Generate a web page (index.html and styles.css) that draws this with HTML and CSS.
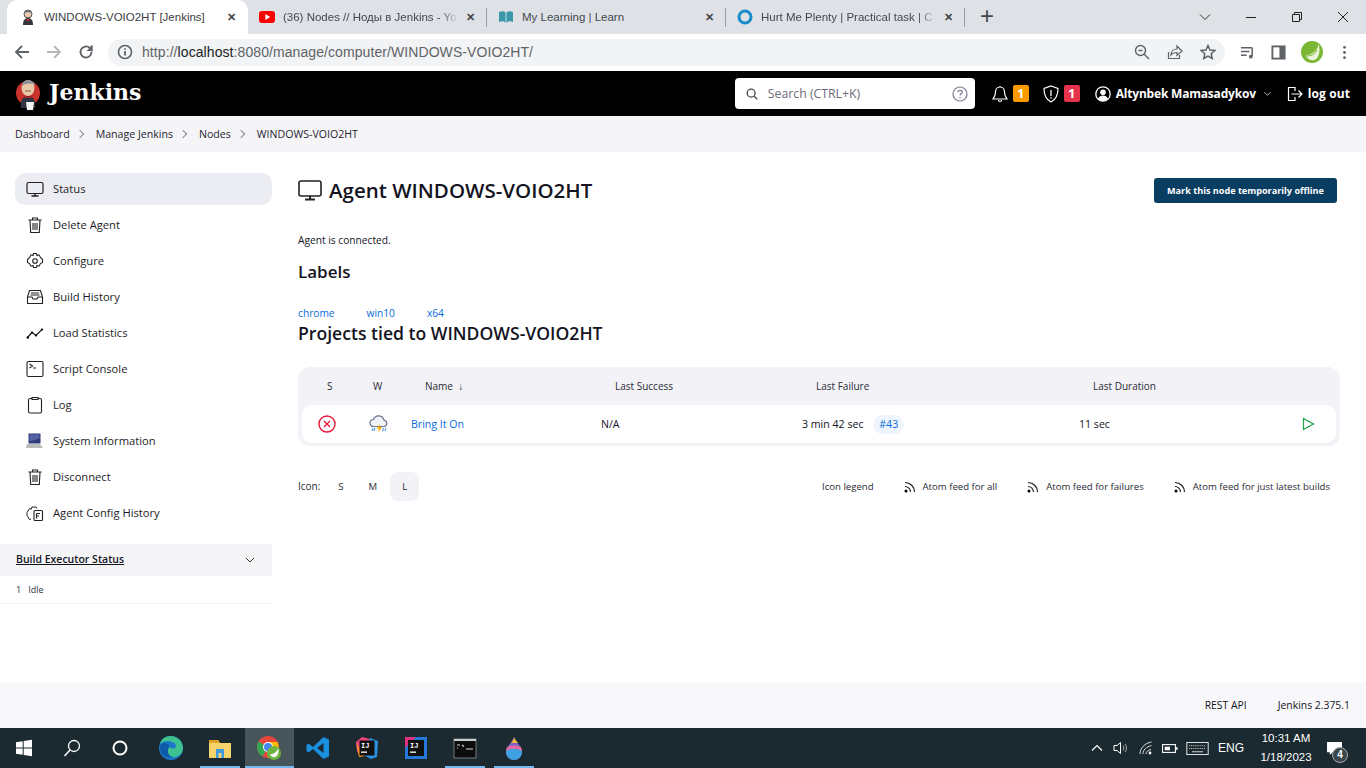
FILE: index.html
```html
<!DOCTYPE html>
<html lang="en">
<head>
    <meta charset="UTF-8">
    <title>WINDOWS-VOIO2HT [Jenkins]</title>
    <link rel="stylesheet" href="styles.css">
</head>
<body>
    <!-- browser window -->
    <div class="tabstrip">
        <div class="tab tab-active">
            <svg class="favicon" viewBox="0 0 16 16"><circle cx="8" cy="5" r="4" fill="#e8c9ad" stroke="#555"/><path d="M3 16c0-5 2-7 5-7s5 2 5 7z" fill="#33363f"/><path d="M6 10h4l-2 3z" fill="#c0312b"/><path d="M4 4c1-3 7-4 8 0-2-1-6-1-8 0z" fill="#6b7280"/></svg>
            <span class="tab-title">WINDOWS-VOIO2HT [Jenkins]</span>
            <span class="tab-close">✕</span>
        </div>
        <div class="tab tab-sep">
            <svg class="favicon" viewBox="0 0 16 16"><rect y="2" width="16" height="12" rx="3" fill="#f00"/><path d="M6.300 5v6l5-3z" fill="#fff"/></svg>
            <span class="tab-title tab-fade">(36) Nodes // Ноды в Jenkins - Yo</span>
            <span class="tab-close">✕</span>
        </div>
        <div class="tab tab-sep">
            <svg class="favicon" viewBox="0 0 16 16"><path d="M1 3c3-1 5-1 7 1 2-2 4-2 7-1v10c-3-1-5-1-7 1-2-2-4-2-7-1z" fill="#3c97a8"/><path d="M8 4v10" stroke="#bde" stroke-width="1"/></svg>
            <span class="tab-title">My Learning | Learn</span>
            <span class="tab-close">✕</span>
        </div>
        <div class="tab tab-sep">
            <svg class="favicon" viewBox="0 0 16 16"><circle cx="8" cy="8" r="6" fill="none" stroke="#1a8ccb" stroke-width="3"/></svg>
            <span class="tab-title tab-fade">Hurt Me Plenty | Practical task | C</span>
            <span class="tab-close">✕</span>
        </div>
        <span class="new-tab">+</span>
        <div class="window-btns">
            <svg viewBox="0 0 12 12"><path d="M1 3.500l5 5 5-5" fill="none" stroke="#333"/></svg>
            <svg viewBox="0 0 12 12"><path d="M1 6.500h10" stroke="#222"/></svg>
            <svg viewBox="0 0 12 12"><path d="M1.500 3.500h7v7h-7zM3.500 3.500v-2h7v7h-2" fill="none" stroke="#222"/></svg>
            <svg viewBox="0 0 12 12"><path d="M1 1l10 10M11 1L1 11" stroke="#222"/></svg>
        </div>
    </div>

    <div class="toolbar">
        <svg class="tool-icon" viewBox="0 0 16 16"><path d="M15 8H2M8 2L2 8l6 6" fill="none" stroke="#5f6368" stroke-width="1.800"/></svg>
        <svg class="tool-icon" viewBox="0 0 16 16"><path d="M1 8h13M8 2l6 6-6 6" fill="none" stroke="#b4b6b9" stroke-width="1.800"/></svg>
        <svg class="tool-icon" viewBox="0 0 16 16"><path d="M13.500 8a5.500 5.500 0 1 1-1.600-3.900L13.500 6V1.500" fill="none" stroke="#5f6368" stroke-width="1.800"/><path d="M14.500 1v6h-6z" fill="#5f6368"/></svg>
        <div class="omnibox">
            <svg class="info-icon" viewBox="0 0 16 16"><circle cx="8" cy="8" r="6.500" fill="none" stroke="#5f6368" stroke-width="1.600"/><path d="M8 7v4.500M8 4.200v1.600" stroke="#5f6368" stroke-width="1.800"/></svg>
            <span class="url">http://<b>localhost</b>:8080/manage/computer/WINDOWS-VOIO2HT/</span>
            <div class="omni-icons">
                <svg viewBox="0 0 16 16"><circle cx="6.500" cy="6.500" r="5" fill="none" stroke="#5f6368" stroke-width="1.400"/><path d="M10 10l5 5M4.500 6.500h4" stroke="#5f6368" stroke-width="1.400"/></svg>
                <svg viewBox="0 0 16 16"><path d="M1.500 8v6.500h11V11" fill="none" stroke="#5f6368" stroke-width="1.200"/><path d="M4 11c0-4 3-6 6-6V2l5 5-5 4.500V8.500c-3 0-5 1-6 2.500z" fill="none" stroke="#5f6368" stroke-width="1.200"/></svg>
                <svg viewBox="0 0 16 16"><path d="M8 1.500l2 4.500 4.800.5-3.600 3.200 1 4.800L8 12l-4.200 2.500 1-4.800L1.200 6.500 6 6z" fill="none" stroke="#5f6368" stroke-width="1.500"/></svg>
            </div>
        </div>
        <div class="ext-icons">
            <svg viewBox="0 0 16 16"><path d="M1 3h12M1 7h9M1 11h6" stroke="#5f6368" stroke-width="1.600"/><path d="M13 3v9" stroke="#5f6368" stroke-width="1.600"/><circle cx="11.500" cy="12.500" r="2" fill="#5f6368"/></svg>
            <svg viewBox="0 0 16 16"><rect x="1.500" y="1.500" width="13" height="13" fill="none" stroke="#5f6368" stroke-width="2"/><rect x="9" y="2" width="5" height="12" fill="#5f6368"/></svg>
            <svg class="spring-avatar" viewBox="0 0 22 22"><circle cx="11" cy="11" r="11" fill="#7ab733"/><path d="M17.500 3C17 9 12 13 5 14.500c1 3.500 5 5.500 8.500 4.500 5-2 6-10 4-16z" fill="#eaf4dc"/><path d="M6 15c4 0 8-2 10-6" fill="none" stroke="#7ab733"/></svg>
            <svg viewBox="0 0 16 16"><circle cx="8" cy="2.500" r="1.500" fill="#5f6368"/><circle cx="8" cy="8" r="1.500" fill="#5f6368"/><circle cx="8" cy="13.500" r="1.500" fill="#5f6368"/></svg>
        </div>
    </div>

    <!-- jenkins header -->
    <header class="page-header">
        <div class="logo">
            <svg class="logo-img" viewBox="0 0 26 32">
                <circle cx="13" cy="15" r="12" fill="#c8322b"/>
                <path d="M6 30c-1-6 1-12 7-12s8 6 7 12z" fill="#2f3340"/>
                <ellipse cx="13" cy="10" rx="6.500" ry="8" fill="#eac7a8"/>
                <path d="M7 8c0-7 12-8 13-1-3-2-9-2-13 1z" fill="#8a8f99"/>
                <path d="M9 17l4 2 4-2-1 3h-6z" fill="#b5221d"/>
                <path d="M11 24h8l-1 8h-6z" fill="#f4f4f4"/>
                <path d="M10 13h6" stroke="#8a5a44"/>
            </svg>
            <span class="logo-text">Jenkins</span>
        </div>
        <div class="header-right">
            <div class="search-box">
                <svg class="search-icon" viewBox="0 0 16 16"><circle cx="7" cy="7" r="4.500" fill="none" stroke="#444" stroke-width="1.500"/><path d="M10.500 10.500L14 14" stroke="#444" stroke-width="1.500"/></svg>
                <span class="search-text">Search (CTRL+K)</span>
                <svg class="help-icon" viewBox="0 0 16 16"><circle cx="8" cy="8" r="7" fill="none" stroke="#7b7b93" stroke-width="1.200"/><path d="M5.800 6.200C6 3.800 10.200 3.800 10.200 6.200 10.200 7.800 8 7.800 8 9.600M8 11v1.300" fill="none" stroke="#7b7b93" stroke-width="1.200"/></svg>
            </div>
            <div class="head-item head-bell">
                <svg viewBox="0 0 16 18"><path d="M8 2c-3 0-4.500 2.500-4.500 5 0 4-1.500 5-2.500 7h14c-1-2-2.500-3-2.500-7 0-2.500-1.500-5-4.500-5zM6.500 15c0 2 3 2 3 0M8 1v1" fill="none" stroke="#fff" stroke-width="1.200"/></svg>
                <span class="badge badge-orange">1</span>
            </div>
            <div class="head-item head-shield">
                <svg viewBox="0 0 16 18"><path d="M8 1l7 2.500c0 7-2 11-7 13.500C3 14.500 1 10.500 1 3.500z" fill="none" stroke="#fff" stroke-width="1.200"/><path d="M8 5v6M8 12.300v1.400" stroke="#fff" stroke-width="1.300"/></svg>
                <span class="badge badge-red">1</span>
            </div>
            <div class="head-item head-user">
                <svg viewBox="0 0 16 16"><circle cx="8" cy="8" r="7.200" fill="none" stroke="#fff" stroke-width="1.300"/><circle cx="8" cy="6.300" r="2.800" fill="#fff"/><path d="M3 13c1-3 3-3.500 5-3.500s4 .5 5 3.500c-3 2.500-7 2.500-10 0z" fill="#fff"/></svg>
                <span class="user-name">Altynbek Mamasadykov</span>
                <svg class="user-caret" viewBox="0 0 10 10"><path d="M1.500 3.500L5 7l3.500-3.500" fill="none" stroke="#ccc"/></svg>
            </div>
            <div class="head-item head-logout">
                <svg viewBox="0 0 16 16"><path d="M8 5V1.500H1.500v13H8V11" fill="none" stroke="#fff" stroke-width="1.200"/><path d="M4.500 8H15M11.500 4.500L15 8l-3.500 3.500" fill="none" stroke="#fff" stroke-width="1.200"/></svg>
                <span class="user-name logout-text">log out</span>
            </div>
        </div>
    </header>

    <nav class="breadcrumbs">
        <span>Dashboard</span><i class="crumb-sep"></i>
        <span>Manage Jenkins</span><i class="crumb-sep"></i>
        <span>Nodes</span><i class="crumb-sep"></i>
        <span>WINDOWS-VOIO2HT</span>
    </nav>

    <div class="page-body">
        <aside class="side-panel">
            <ul class="side-tasks">
                <li class="task task-active">
                    <svg viewBox="0 0 18 18"><rect x="1" y="2.500" width="16" height="11" rx="1.500" fill="none" stroke="#222" stroke-width="1.200"/><path d="M5.500 16h7M9 13.500V16" stroke="#222" stroke-width="1.500"/></svg>
                    <span>Status</span>
                </li>
                <li class="task">
                    <svg viewBox="0 0 18 18"><path d="M2.500 4h13M6.500 4V2h5v2M4 4l.7 12.500h8.600L14 4M7 7v7M9 7v7M11 7v7" fill="none" stroke="#222" stroke-width="1.100"/></svg>
                    <span>Delete Agent</span>
                </li>
                <li class="task">
                    <svg viewBox="0 0 18 18"><path d="M7.500 1.500h3l.5 2 2-.7 1.500 2.600 2 2.100v3l-2 1.100-1.500 2.600-2-.7-.5 2h-3l-.5-2-2 .7-1.500-2.600-2-1.100v-3l2-2.100L5 2.800l2 .7z" fill="none" stroke="#222" stroke-width="1.100"/><circle cx="9" cy="9" r="2.300" fill="none" stroke="#222" stroke-width="1.100"/></svg>
                    <span>Configure</span>
                </li>
                <li class="task">
                    <svg viewBox="0 0 18 18"><path d="M1.500 9l2-6.500h11l2 6.500v6.500h-15zM1.500 9H6l1 2h4l1-2h4.500M5 5h8M4.500 7h9" fill="none" stroke="#222" stroke-width="1.100"/></svg>
                    <span>Build History</span>
                </li>
                <li class="task">
                    <svg viewBox="0 0 18 18"><path d="M1.500 13.500l4.500-5 4 3 6.500-6.500" fill="none" stroke="#222" stroke-width="1.300"/><circle cx="1.800" cy="13.500" r="1.200"/><circle cx="6" cy="8.500" r="1.100"/><circle cx="10" cy="11.500" r="1.100"/><circle cx="16" cy="5.500" r="1.100"/></svg>
                    <span>Load Statistics</span>
                </li>
                <li class="task">
                    <svg viewBox="0 0 18 18"><rect x="1" y="1.500" width="16" height="15" rx="1.500" fill="none" stroke="#222" stroke-width="1.100"/><path d="M3.500 4l3 2-3 2M7 8h3" fill="none" stroke="#222" stroke-width="1.100"/></svg>
                    <span>Script Console</span>
                </li>
                <li class="task">
                    <svg viewBox="0 0 18 18"><path d="M6 2.500H4a1.500 1.500 0 0 0-1.500 1.500v11.500A1.500 1.500 0 0 0 4 17h10a1.500 1.500 0 0 0 1.500-1.500V4A1.500 1.500 0 0 0 14 2.500h-2M6 1.500h6v2H6z" fill="none" stroke="#222" stroke-width="1.100"/></svg>
                    <span>Log</span>
                </li>
                <li class="task">
                    <svg viewBox="0 0 18 18"><rect x="2.500" y="1.500" width="12" height="10" fill="#2e3a78"/><path d="M3.500 2.500h10v4l-10 3z" fill="#5562a6"/><path d="M1 12h13l3 4H0z" fill="#b9bcb8"/></svg>
                    <span>System Information</span>
                </li>
                <li class="task">
                    <svg viewBox="0 0 18 18"><path d="M2.500 4h13M6.500 4V2h5v2M4 4l.7 12.500h8.600L14 4M7 7v7M9 7v7M11 7v7" fill="none" stroke="#222" stroke-width="1.100"/></svg>
                    <span>Disconnect</span>
                </li>
                <li class="task">
                    <svg viewBox="0 0 18 18"><path d="M5 15l-1.500.5L2 13l-1-1.500v-3L2 7l1.500-2.500 1.800.6L6 3h4l.8 1.500" fill="none" stroke="#222" stroke-width="1"/><rect x="8" y="6.500" width="8.500" height="10" rx="1" fill="none" stroke="#222" stroke-width="1.100"/><path d="M10.500 9.500h3.500M10.500 9.500v5M10.500 12h2.500" fill="none" stroke="#222" stroke-width="1.100"/></svg>
                    <span>Agent Config History</span>
                </li>
            </ul>
            <div class="executors">
                <div class="executors-head">
                    <span class="executors-title">Build Executor Status</span>
                    <svg viewBox="0 0 10 10"><path d="M1 3l4 4 4-4" fill="none" stroke="#333"/></svg>
                </div>
                <div class="executors-row"><span>1</span><span>Idle</span></div>
            </div>
        </aside>

        <main class="main-panel">
            <div class="title-row">
                <h1 class="agent-title">
                    <svg viewBox="0 0 24 24"><rect x="1" y="3" width="22" height="15" rx="2" fill="none" stroke="#222" stroke-width="1.600"/><path d="M7 21.500h10M12 18v3.500" stroke="#222" stroke-width="2"/></svg>
                    Agent WINDOWS-VOIO2HT
                </h1>
                <button class="offline-btn">Mark this node temporarily offline</button>
            </div>
            <p class="agent-status">Agent is connected.</p>
            <h2 class="section-title labels-title">Labels</h2>
            <div class="labels">
                <a>chrome</a><a>win10</a><a>x64</a>
            </div>
            <h2 class="section-title projects-title">Projects tied to WINDOWS-VOIO2HT</h2>

            <div class="job-table">
                <div class="job-row job-head">
                    <span class="col-s">S</span>
                    <span class="col-w">W</span>
                    <span class="col-name">Name&nbsp; ↓</span>
                    <span>Last Success</span>
                    <span>Last Failure</span>
                    <span>Last Duration</span>
                    <span></span>
                </div>
                <div class="job-row job-data">
                    <span class="cell-icon">
                        <svg viewBox="0 0 18 18"><circle cx="9" cy="9" r="8" fill="none" stroke="#e6173b" stroke-width="1.400"/><path d="M6 6l6 6M12 6l-6 6" stroke="#e6173b" stroke-width="1.400"/></svg>
                    </span>
                    <span class="cell-icon">
                        <svg class="weather" viewBox="0 0 20 18"><path d="M4.500 11.500a3.500 3.500 0 0 1 0-7 5.500 5.500 0 0 1 10.500.6 3.300 3.300 0 0 1 .5 6.400z" fill="#f1f2f7" stroke="#6e7488" stroke-width="1.200"/><path d="M11 9L7.500 13.500H10L9 18l4-6h-2.500z" fill="#f5a800"/><path d="M4 13l-1 3M6 13l-1 3M14.500 13l-1 3M17 13l-1 3" stroke="#4f9be0" stroke-width="1.100"/></svg>
                    </span>
                    <a class="job-link">Bring It On</a>
                    <span>N/A</span>
                    <span>3 min 42 sec <a class="build-pill">#43</a></span>
                    <span>11 sec</span>
                    <span class="cell-play">
                        <svg viewBox="0 0 14 14"><path d="M2.500 1.500l10 5.500-10 5.500z" fill="none" stroke="#1ea64b" stroke-width="1.300"/></svg>
                    </span>
                </div>
            </div>

            <div class="table-foot">
                <div class="icon-size">
                    <span class="icon-label">Icon:</span>
                    <span class="size">S</span>
                    <span class="size">M</span>
                    <span class="size size-on">L</span>
                </div>
                <div class="feeds">
                    <span class="feed-legend">Icon legend</span>
                    <span class="feed"><svg viewBox="0 0 12 12"><circle cx="2" cy="10" r="1.500"/><path d="M1 5.500a5.500 5.500 0 0 1 5.500 5.500M1 1.500A9.500 9.500 0 0 1 10.500 11" fill="none" stroke="#222" stroke-width="1.200"/></svg>Atom feed for all</span>
                    <span class="feed"><svg viewBox="0 0 12 12"><circle cx="2" cy="10" r="1.500"/><path d="M1 5.500a5.500 5.500 0 0 1 5.500 5.500M1 1.500A9.500 9.500 0 0 1 10.500 11" fill="none" stroke="#222" stroke-width="1.200"/></svg>Atom feed for failures</span>
                    <span class="feed"><svg viewBox="0 0 12 12"><circle cx="2" cy="10" r="1.500"/><path d="M1 5.500a5.500 5.500 0 0 1 5.500 5.500M1 1.500A9.500 9.500 0 0 1 10.500 11" fill="none" stroke="#222" stroke-width="1.200"/></svg>Atom feed for just latest builds</span>
                </div>
            </div>
        </main>
    </div>

    <footer class="page-footer">
        <span>REST API</span>
        <span>Jenkins 2.375.1</span>
    </footer>

    <!-- windows taskbar -->
    <div class="taskbar">
        <div class="task-slot">
            <svg viewBox="0 0 18 18"><path d="M1 3.200l6.700-1v6.300H1zM8.700 2l8.300-1.200v7.700H8.700zM1 9.500h6.700v6.300l-6.700-1zM8.700 9.500H17v7.700L8.700 16z" fill="#fff"/></svg>
        </div>
        <div class="task-slot">
            <svg viewBox="0 0 18 18"><circle cx="11" cy="7" r="5.500" fill="none" stroke="#fff" stroke-width="1.300"/><path d="M7 11l-5.500 6" stroke="#fff" stroke-width="1.500"/></svg>
        </div>
        <div class="task-slot">
            <svg viewBox="0 0 18 18"><circle cx="9" cy="9" r="6.500" fill="none" stroke="#fff" stroke-width="2"/></svg>
        </div>
        <div class="task-apps">
            <div class="task-app">
                <svg viewBox="0 0 24 24"><circle cx="12" cy="12" r="12" fill="#1b78c8"/><path d="M24 12c0-7-6-12-12-12C6 0 2 3 1 8c3-3 8-4 12-2 4 1 5 4 3 6-2 1-5 1-5-2-4 3-3 9 2 11 5 1 11-3 11-9z" fill="#3ec28f"/><path d="M11 10c-3 3-3 9 2 11-5 2-12-2-12-9 0-1 0-3 1-4 3-2 7-1 9 2z" fill="#0f5aa8"/></svg>
            </div>
            <div class="task-app task-running">
                <svg viewBox="0 0 24 24"><path d="M1 4h9l2 3h11v15H1z" fill="#f6d26a"/><path d="M1 4h9l2 3H1z" fill="#e0a526"/><path d="M8 13h8v9h-2.500v-5h-3v5H8z" fill="#3e9be0"/></svg>
            </div>
            <div class="task-app task-running task-current">
                <svg viewBox="0 0 24 24"><circle cx="11" cy="11" r="11" fill="#e8453c"/><path d="M11 11l-5.500 9.500A11 11 0 0 1 1.500 5.500z" fill="#34a853"/><path d="M11 6h9.500A11 11 0 0 1 11 22z" fill="#fbbc05"/><circle cx="11" cy="11" r="5" fill="#fff"/><circle cx="11" cy="11" r="4" fill="#4285f4"/><circle cx="17" cy="17" r="7" fill="#6db33f"/><path d="M21 12c-1 4-4 6-8 6.500 1 2 3 3 5 2.500 3-1 4-5 3-9z" fill="#fff"/></svg>
            </div>
            <div class="task-app">
                <svg viewBox="0 0 24 24"><path d="M17.500 1L23 3.500v17L17.500 23 7 13l-4.500 3.500L.5 15v-6l2-1.500L7 11zm0 6L11 12l6.500 5z" fill="#1a8fe0"/></svg>
            </div>
            <div class="task-app">
                <svg viewBox="0 0 24 24"><path d="M1 6l6-5 8 2-2 9-8 9-3-6z" fill="#f0407e"/><path d="M15 2l8 3-1 16-6 2-6-3z" fill="#2b8fe0"/><path d="M1 6l5 10 4 4-6 1z" fill="#f59a23"/><rect x="4.500" y="4.500" width="15" height="15" fill="#111"/><text class="ij-text" x="6" y="12">IJ</text><rect x="6" y="15.500" width="6" height="1.300" fill="#fff"/></svg>
            </div>
            <div class="task-app">
                <svg viewBox="0 0 24 24"><rect x="1" y="1" width="22" height="22" fill="#2478d8"/><path d="M1 1h11L1 12z" fill="#e0317f"/><rect x="4" y="4" width="16" height="16" fill="#111"/><text class="ij-text" x="6" y="12">IJ</text><rect x="6" y="15.500" width="6" height="1.300" fill="#fff"/></svg>
            </div>
            <div class="task-app task-running">
                <svg viewBox="0 0 24 24"><rect x="1" y="3" width="22" height="19" fill="#0c0c0c" stroke="#8a8f92" stroke-width=".8"/><rect x="1" y="3" width="22" height="2" fill="#c9cccd"/><path d="M4 9h3M4 12h1M9 9l2 1.500M13 13h7" stroke="#d8d8d8" stroke-width="1.200"/></svg>
            </div>
            <div class="task-app task-running">
                <svg viewBox="0 0 24 24"><path d="M12 1c1 4 8 9 8 15a8 8 0 0 1-16 0C4 10 11 6 12 1z" fill="#7f62c9"/><path d="M4.300 14c4-3 11-3 15.400 0l.3 2c0 4-3 8-8 8s-8-4-8-8z" fill="#3ea0e0"/><path d="M5 11c4-2 10-2 14 0l1 4c-5-3-11-3-16 0z" fill="#e66aa2"/><path d="M12 1c1 3 3 4 4 6H9c1-2 3-3 3-6z" fill="#f5b73b"/></svg>
            </div>
        </div>
        <div class="tray">
            <svg class="tray-chevron" viewBox="0 0 12 12"><path d="M1 8.500l5-5 5 5" fill="none" stroke="#fff" stroke-width="1.200"/></svg>
            <svg class="tray-speaker" viewBox="0 0 16 14"><path d="M1 4.500h3L7.500 1.500v11L4 9.500H1z" fill="none" stroke="#fff"/><path d="M10 4.500c1 1.500 1 3.500 0 5M12 3c2 2 2 6 0 8" fill="none" stroke="#aaa"/></svg>
            <svg class="tray-wifi" viewBox="0 0 14 14"><path d="M1 13C1 7 6 2 12.500 1M4 13c0-4 3-7 8.500-8.500M7 13c0-2 2-4 5-4.500" fill="none" stroke="#ddd"/><circle cx="11" cy="12" r="1.400" fill="#fff"/></svg>
            <svg class="tray-battery" viewBox="0 0 18 12"><rect x=".6" y="1.600" width="14.500" height="8.800" fill="none" stroke="#fff" stroke-width="1.200"/><rect x="3" y="4" width="6" height="4" fill="#fff"/><rect x="15.500" y="4.500" width="2" height="3" fill="#fff"/></svg>
            <svg class="tray-keys" viewBox="0 0 24 14"><rect x=".5" y=".5" width="23" height="13" fill="none" stroke="#eee"/><path d="M3 4h18M3 7h18" stroke="#ddd" stroke-dasharray="1 1"/><path d="M6 10.500h12" stroke="#ddd"/></svg>
            <span class="tray-lang">ENG</span>
            <div class="clock"><span>10:31 AM</span><span>1/18/2023</span></div>
            <div class="notif">
                <svg viewBox="0 0 18 16"><path d="M1 1h16v11H7l-3 3v-3H1z" fill="#fff"/></svg>
                <span class="notif-count">4</span>
            </div>
        </div>
    </div>
</body>
</html>
```

FILE: styles.css
```css
* {
    margin: 0;
    padding: 0;
    box-sizing: border-box;
}

body {
    width: 1366px;
    height: 768px;
    overflow: hidden;
    display: flex;
    flex-direction: column;
    font-family: "Open Sans", "Noto Sans", sans-serif;
    font-size: 11px;
    color: #14141f;
    background: #fff;
}

svg {
    display: block;
    flex-shrink: 0;
}

/* browser chrome */
.tabstrip {
    height: 34px;
    flex-shrink: 0;
    display: flex;
    align-items: flex-end;
    padding-left: 7px;
    background: #dee1e6;
}

.tab {
    position: relative;
    width: 239px;
    height: 34px;
    display: flex;
    align-items: center;
    padding: 0 9px 0 11px;
    font-family: "Liberation Sans", sans-serif;
    font-size: 11.5px;
    color: #45484d;
}

.tab-active {
    width: 241px;
    padding-left: 13px;
    background: #fff;
    border-radius: 10px 10px 0 0;
    color: #3c4043;
}

.tab-sep::after {
    content: "";
    position: absolute;
    right: 0;
    top: 8px;
    height: 19px;
    border-right: 1px solid #9a9ea3;
}

.favicon {
    width: 16px;
    height: 16px;
    margin-right: 8px;
}

.tab-title {
    flex: 1;
    overflow: hidden;
    white-space: nowrap;
}

.tab-fade {
    -webkit-mask-image: linear-gradient(to right, #000 90%, transparent);
    mask-image: linear-gradient(to right, #000 90%, transparent);
}

.tab-close {
    width: 16px;
    margin-left: 4px;
    text-align: center;
    font-size: 11px;
    font-weight: bold;
    color: #44474b;
}

.new-tab {
    height: 34px;
    margin-left: 15px;
    font: 24px/32px "Liberation Sans", sans-serif;
    color: #44474b;
}

.window-btns {
    margin-left: auto;
    height: 34px;
    display: flex;
    align-items: center;
    gap: 34px;
    padding: 0 17px 0 0;
}

.window-btns svg {
    width: 12px;
    height: 12px;
}

.toolbar {
    height: 37px;
    flex-shrink: 0;
    display: flex;
    align-items: center;
    padding: 0 0 1px 14px;
    background: #fff;
}

.tool-icon {
    width: 16px;
    height: 16px;
    margin-right: 16px;
}

.omnibox {
    width: 1117px;
    height: 27px;
    margin-left: -2px;
    display: flex;
    align-items: center;
    padding: 0 9px;
    background: #f1f3f4;
    border-radius: 14px;
}

.info-icon {
    width: 16px;
    height: 16px;
    margin-right: 9px;
}

.url {
    font-family: "Liberation Sans", sans-serif;
    font-size: 14px;
    letter-spacing: 0.08px;
    color: #5f6368;
}

.url b {
    font-weight: normal;
    color: #202124;
}

.omni-icons {
    margin-left: auto;
    display: flex;
    gap: 17px;
}

.omni-icons svg {
    width: 16px;
    height: 16px;
}

.ext-icons {
    display: flex;
    align-items: center;
    gap: 16px;
    margin-left: 15px;
}

.ext-icons svg {
    width: 15px;
    height: 15px;
}

.ext-icons .spring-avatar {
    width: 22px;
    height: 22px;
    margin-left: -1px;
    margin-right: -2px;
}

/* jenkins header */
.page-header {
    height: 45px;
    flex-shrink: 0;
    display: flex;
    align-items: center;
    padding: 0 16px 0 15px;
    background: #000;
    color: #fff;
}

.logo {
    display: flex;
    align-items: center;
    gap: 8px;
}

.logo-img {
    width: 26px;
    height: 32px;
}

.logo-text {
    font-family: "DejaVu Serif", "Liberation Serif", serif;
    font-size: 22px;
    font-weight: bold;
    margin-top: -4px;
}

.header-right {
    margin-left: auto;
    display: flex;
    align-items: center;
}

.search-box {
    width: 240px;
    height: 31px;
    display: flex;
    align-items: center;
    padding: 0 7px 0 10px;
    background: #fff;
    border-radius: 4px;
    color: #6d6b7a;
    margin-right: 17px;
}

.search-icon {
    width: 14px;
    height: 14px;
    margin-right: 9px;
}

.search-text {
    flex: 1;
    font-size: 12.3px;
}

.help-icon {
    width: 16px;
    height: 16px;
}

.head-item {
    display: flex;
    align-items: center;
    font-weight: 700;
}

.head-item svg {
    width: 16px;
    height: 18px;
}

.head-bell {
    margin-right: 14px;
}

.head-shield {
    margin-right: 15px;
}

.badge {
    width: 16px;
    height: 17px;
    margin-left: 5px;
    border-radius: 2px;
    text-align: center;
    font-size: 13px;
    line-height: 17px;
}

.badge-orange {
    background: #fe9a00;
}

.badge-red {
    background: #e6324b;
}

.user-name {
    margin-left: 5px;
    font-size: 12px;
    letter-spacing: -0.2px;
}

.logout-text {
    letter-spacing: 0.1px;
}

.head-user .user-caret {
    width: 9px;
    height: 9px;
    margin: 0 15px 0 7px;
}

/* breadcrumbs */
.breadcrumbs {
    height: 36px;
    flex-shrink: 0;
    display: flex;
    align-items: center;
    padding-left: 15px;
    background: #f5f5f8;
    color: #25252f;
    font-size: 10.6px;
}

.crumb-sep {
    width: 6px;
    height: 6px;
    margin: 0 13px 0 7px;
    border-top: 1px solid #8a8a96;
    border-right: 1px solid #8a8a96;
    transform: rotate(45deg);
}

/* page layout */
.page-body {
    flex: 1;
    display: flex;
}

.side-panel {
    width: 272px;
    flex-shrink: 0;
    padding-top: 21px;
}

.side-tasks {
    list-style: none;
    margin-left: 15px;
}

.task {
    height: 32px;
    margin-bottom: 4px;
    display: flex;
    align-items: center;
    padding-left: 11px;
    gap: 9px;
    border-radius: 10px;
    color: #1d1d28;
    font-size: 11.2px;
}

.task span {
    margin-top: -2px;
}

.task svg {
    width: 18px;
    height: 18px;
}

.task-active {
    background: #ecedf2;
}

.executors {
    margin-top: 15px;
}

.executors-head {
    height: 32px;
    display: flex;
    align-items: center;
    justify-content: space-between;
    padding: 0 17px 0 16px;
    background: #f5f5f8;
}

.executors-head svg {
    width: 10px;
    height: 10px;
}

.executors-title {
    margin-top: -2px;
    font-size: 10.5px;
    font-weight: 600;
    text-decoration: underline;
}

.executors-row {
    height: 28px;
    display: flex;
    align-items: center;
    gap: 7px;
    padding-left: 16px;
    border-bottom: 1px solid #f1f1f4;
    font-size: 9px;
    color: #33333d;
}

.main-panel {
    flex: 1;
    padding: 23px 26px 0;
}

.title-row {
    height: 29px;
    display: flex;
    align-items: center;
    justify-content: space-between;
    padding-right: 3px;
}

.agent-title {
    display: flex;
    align-items: center;
    gap: 7px;
    font-size: 20.5px;
    font-weight: 600;
}

.agent-title svg {
    width: 24px;
    height: 24px;
}

.offline-btn {
    width: 183px;
    height: 25px;
    margin-top: 2px;
    border: none;
    border-radius: 3px;
    background: #0a3d62;
    color: #fff;
    font-family: inherit;
    font-size: 9.1px;
    font-weight: 700;
}

.agent-status {
    margin-top: 28px;
    font-size: 10.2px;
    line-height: 16px;
}

.section-title {
    font-size: 17px;
    font-weight: 600;
    line-height: 24px;
}

.labels-title {
    margin-top: 12px;
}

.labels {
    margin-top: 21px;
    height: 16px;
    display: flex;
    gap: 32px;
    font-size: 10.2px;
    line-height: 16px;
    color: #0b6bdc;
}

.projects-title {
    font-size: 17.6px;
}

.job-table {
    width: 1042px;
    margin-top: 22px;
    padding: 0 4px 3px;
    background: #f2f2f7;
    border-radius: 12px;
}

.job-row {
    display: grid;
    grid-template-columns: 56px 42px 190px 201px 277px 222px 1fr;
    align-items: center;
}

.job-row > * {
    padding-left: 11px;
}

.job-head {
    height: 38px;
    color: #2a2a36;
    font-size: 10px;
}

.job-head > * {
    padding-left: 25px;
}

.job-head .col-w {
    padding-left: 15px;
}

.job-data {
    height: 38px;
    background: #fff;
    border-radius: 10px;
    font-size: 10.6px;
}

.cell-icon svg {
    width: 18px;
    height: 18px;
    margin-left: 5px;
}

.cell-icon .weather {
    width: 20px;
    margin-left: 0;
}

.job-link {
    color: #0b6bdc;
}

.build-pill {
    display: inline-block;
    height: 19px;
    line-height: 19px;
    margin-left: 7px;
    padding: 0 6px;
    border-radius: 10px;
    background: #eef5fd;
    color: #0b6bdc;
}

.cell-play svg {
    width: 14px;
    height: 14px;
}

.table-foot {
    width: 1042px;
    margin-top: 26px;
    display: flex;
    align-items: center;
    justify-content: space-between;
    font-size: 9.6px;
    color: #2a2a36;
}

.icon-size {
    display: flex;
    align-items: center;
}

.icon-label {
    margin: -2px 6px 0 0;
    font-size: 10px;
}

.size {
    width: 29px;
    height: 29px;
    margin-right: 3px;
    text-align: center;
    line-height: 29px;
    border-radius: 8px;
}

.size-on {
    background: #f2f2f7;
}

.feeds {
    display: flex;
    align-items: center;
    gap: 30px;
    padding-right: 10px;
}

.feed {
    display: flex;
    align-items: center;
    gap: 7px;
}

.feed svg {
    width: 12px;
    height: 12px;
}

.page-footer {
    height: 45px;
    flex-shrink: 0;
    display: flex;
    align-items: center;
    justify-content: flex-end;
    gap: 31px;
    padding: 0 16px 2px 0;
    background: #f8f8fa;
    font-size: 10.4px;
}

/* windows taskbar */
.taskbar {
    height: 40px;
    flex-shrink: 0;
    display: flex;
    background: #1b2a30;
    color: #fff;
}

.task-slot {
    width: 48px;
    display: flex;
    align-items: center;
    justify-content: center;
}

.task-slot svg {
    width: 18px;
    height: 18px;
}

.task-apps {
    display: flex;
    margin-left: 3px;
}

.task-app {
    position: relative;
    width: 49px;
    padding-right: 2px;
    display: flex;
    align-items: center;
    justify-content: center;
}

.task-app svg {
    width: 24px;
    height: 24px;
}

.task-running::after {
    content: "";
    position: absolute;
    bottom: 0;
    left: 4px;
    right: 5px;
    height: 2px;
    background: #76b9ed;
}

.task-current {
    background: #46565a;
}

.task-current::after {
    left: 0;
    right: 0;
}

.ij-text {
    font: bold 7px "Liberation Mono", monospace;
    fill: #fff;
}

.tray {
    margin-left: auto;
    display: flex;
    align-items: center;
    font-family: "Liberation Sans", sans-serif;
    font-size: 12px;
}

.tray-chevron {
    width: 12px;
    height: 12px;
    margin-right: 10px;
}

.tray-speaker {
    width: 16px;
    height: 14px;
    margin-right: 10px;
}

.tray-wifi {
    width: 14px;
    height: 14px;
    margin-right: 9px;
}

.tray-battery {
    width: 16px;
    height: 11px;
    margin-right: 8px;
}

.tray-keys {
    width: 23px;
    height: 13px;
    margin-right: 9px;
}

.clock {
    width: 60px;
    margin-left: 12px;
    display: flex;
    flex-direction: column;
    align-items: center;
    font-size: 11.5px;
    line-height: 19px;
}

.notif {
    position: relative;
    width: 40px;
    margin-left: 10px;
}

.notif svg {
    width: 17px;
    height: 15px;
}

.notif-count {
    position: absolute;
    top: 6px;
    left: 6px;
    width: 16px;
    height: 16px;
    border-radius: 50%;
    background: #3a474c;
    border: 1px solid #aaa;
    text-align: center;
    font-size: 10px;
    font-weight: bold;
    line-height: 14px;
}
```
